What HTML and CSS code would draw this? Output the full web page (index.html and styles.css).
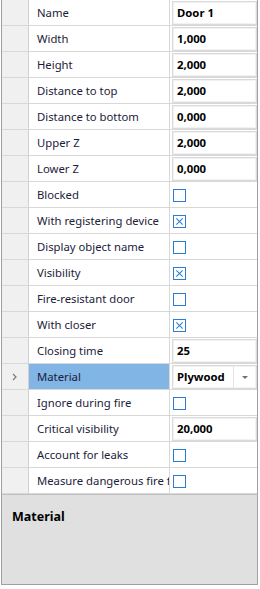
FILE: index.html
```html
<!DOCTYPE html>
<html lang="en">
<head>
    <meta charset="UTF-8">
    <title>Properties</title>
    <link rel="stylesheet" href="styles.css">
</head>
<body>

    <div class="grid">
        <div class="row"><div class="hdr"></div><div class="name">Name</div><div class="val"><div class="box">Door 1</div></div></div>
        <div class="row"><div class="hdr"></div><div class="name">Width</div><div class="val"><div class="box">1,000</div></div></div>
        <div class="row"><div class="hdr"></div><div class="name">Height</div><div class="val"><div class="box">2,000</div></div></div>
        <div class="row"><div class="hdr"></div><div class="name">Distance to top</div><div class="val"><div class="box">2,000</div></div></div>
        <div class="row"><div class="hdr"></div><div class="name">Distance to bottom</div><div class="val"><div class="box">0,000</div></div></div>
        <div class="row"><div class="hdr"></div><div class="name">Upper Z</div><div class="val"><div class="box">2,000</div></div></div>
        <div class="row"><div class="hdr"></div><div class="name">Lower Z</div><div class="val"><div class="box">0,000</div></div></div>
        <div class="row"><div class="hdr"></div><div class="name">Blocked</div><div class="val"><span class="chk"></span></div></div>
        <div class="row"><div class="hdr"></div><div class="name">With registering device</div><div class="val"><span class="chk on"></span></div></div>
        <div class="row"><div class="hdr"></div><div class="name">Display object name</div><div class="val"><span class="chk"></span></div></div>
        <div class="row"><div class="hdr"></div><div class="name">Visibility</div><div class="val"><span class="chk on"></span></div></div>
        <div class="row"><div class="hdr"></div><div class="name">Fire-resistant door</div><div class="val"><span class="chk"></span></div></div>
        <div class="row"><div class="hdr"></div><div class="name">With closer</div><div class="val"><span class="chk on"></span></div></div>
        <div class="row"><div class="hdr"></div><div class="name">Closing time</div><div class="val"><div class="box">25</div></div></div>
        <div class="row current">
            <div class="hdr"><svg width="8" height="8" viewBox="0 0 8 8"><path d="M2 1 L5 4 L2 7" fill="none" stroke="#7a7a7a" stroke-width="1.2"/></svg></div>
            <div class="name">Material</div>
            <div class="val"><div class="box combo"><span>Plywood</span><span class="arrow"></span></div></div>
        </div>
        <div class="row"><div class="hdr"></div><div class="name">Ignore during fire</div><div class="val"><span class="chk"></span></div></div>
        <div class="row"><div class="hdr"></div><div class="name">Critical visibility</div><div class="val"><div class="box">20,000</div></div></div>
        <div class="row"><div class="hdr"></div><div class="name">Account for leaks</div><div class="val"><span class="chk"></span></div></div>
        <div class="row"><div class="hdr"></div><div class="name">Measure dangerous fire factors</div><div class="val"><span class="chk"></span></div></div>
    </div>

    <div class="desc">
        <div class="desc-title">Material</div>
    </div>

</body>
</html>
```

FILE: styles.css
```css
body {
    margin: 0;
    font-family: "Noto Sans", "Open Sans", sans-serif;
    font-size: 11.3px;
    background-color: #ffffff;
}
.grid {
    margin-left: 1px;
    width: 255px;
    border-left: 1px solid #a0a0a0;
    border-right: 1px solid #a0a0a0;
}
.row {
    display: grid;
    grid-template-columns: 27px 141px 1fr;
    height: 25px;
    border-bottom: 1px solid #d8d8d8;
}
.hdr {
    background-color: #f0f0f0;
    border-right: 1px solid #d0d0d0;
    display: flex;
    align-items: center;
    justify-content: center;
}
.name {
    color: #1c1c3a;
    padding-left: 8px;
    border-right: 1px solid #d8d8d8;
    white-space: nowrap;
    overflow: hidden;
    line-height: 25px;
}
.row.current .name {
    background-color: #80b5e6;
}
.val {
    display: flex;
    align-items: center;
    padding: 1px 0 0 2px;
    overflow: hidden;
}
.box {
    box-sizing: border-box;
    width: 100%;
    height: 24px;
    align-self: flex-start;
    border: 1px solid #dadada;
    box-shadow: inset 0 0 0 1px #f2f2f2;
    padding-left: 4px;
    line-height: 22px;
    font-weight: bold;
    color: #000000;
}
.combo {
    display: flex;
    justify-content: space-between;
}
.arrow {
    width: 22px;
    border-left: 1px solid #e4e4e4;
    position: relative;
}
.arrow::after {
    content: "";
    position: absolute;
    left: 8px;
    top: 10px;
    border-left: 3px solid transparent;
    border-right: 3px solid transparent;
    border-top: 3px solid #707070;
}
.chk {
    display: inline-block;
    box-sizing: border-box;
    width: 13px;
    height: 13px;
    margin-left: 1px;
    border: 1px solid #2b7cd3;
    background-color: #ffffff;
    position: relative;
}
.chk.on::before,
.chk.on::after {
    content: "";
    position: absolute;
    left: 1px;
    top: 5px;
    width: 9px;
    height: 1px;
    background-color: #2b7cd3;
    transform: rotate(45deg);
}
.chk.on::after {
    transform: rotate(-45deg);
}
.desc {
    margin-left: 1px;
    width: 255px;
    height: 89px;
    background-color: #e0e0e0;
    border: 1px solid #a0a0a0;
    border-top-color: #c0c0c0;
}
.desc-title {
    font-weight: bold;
    font-size: 12.5px;
    color: #000000;
    padding: 13px 0 0 10px;
}
```
